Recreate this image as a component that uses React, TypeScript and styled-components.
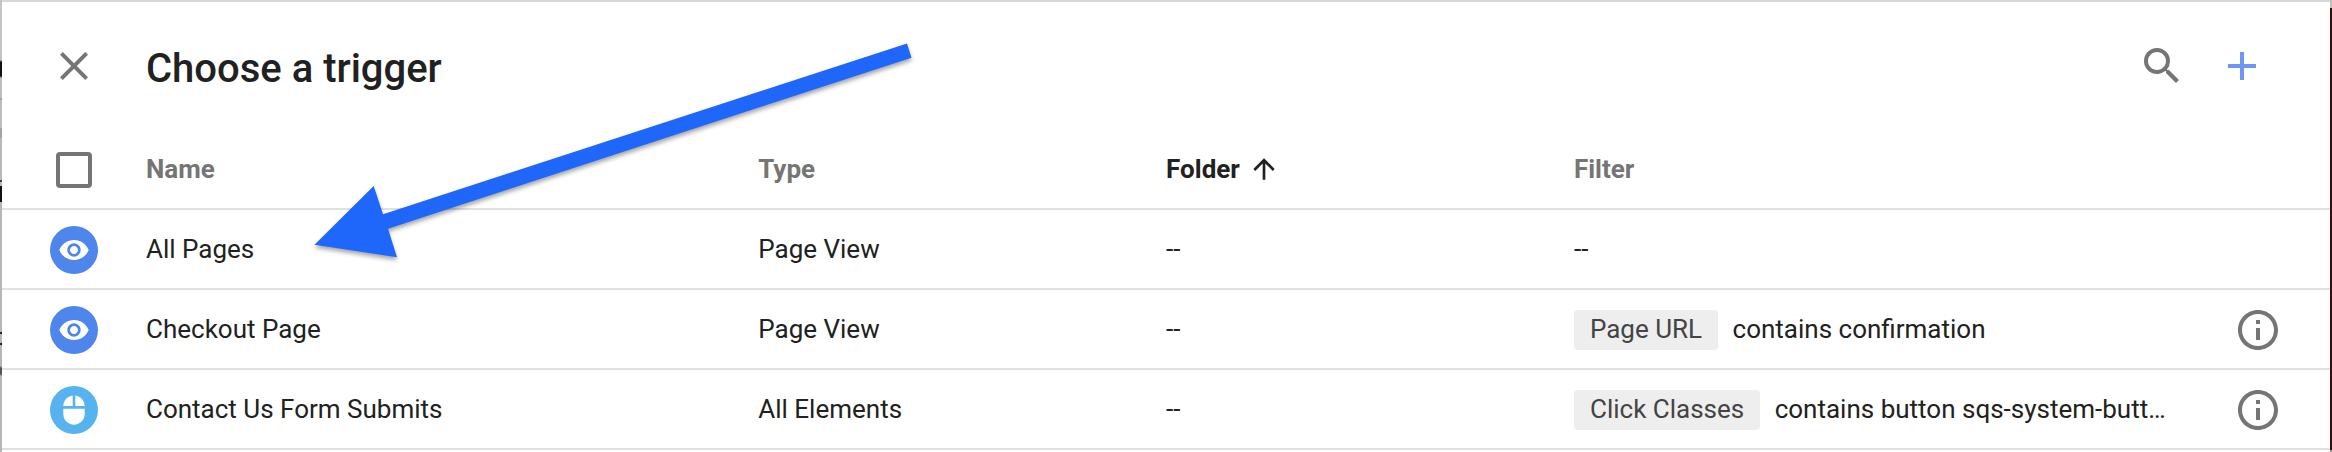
import React from 'react';
import styled, { createGlobalStyle } from 'styled-components';
import {
  MdAdd,
  MdArrowUpward,
  MdClose,
  MdInfoOutline,
  MdMouse,
  MdSearch,
  MdVisibility,
} from 'react-icons/md';

const GlobalStyle = createGlobalStyle`
  * { box-sizing: border-box; }
  body {
    margin: 0;
    background: #fff;
    color: #212121;
    font-family: Roboto, sans-serif;
    font-size: 26px;
    line-height: 40px;
  }
`;

const Frame = styled.div`
  display: grid;
  grid-template-columns: 2px minmax(0, 1fr) 2px;
  min-height: 100vh;
`;

/* Sliver of the dimmed page that shows beside the sheet. */
const LeftEdge = styled.div`
  background: linear-gradient(
    #c4c4c4 0 60px,
    #111 62px 76px,
    #bdbdbd 78px 98px,
    #a3a3a3 98px 100px,
    #bdbdbd 100px 128px,
    #a3a3a3 128px 138px,
    #b9b9b9 138px 180px,
    #444 180px 182px,
    #b9b9b9 182px 186px,
    #111 186px 202px,
    #b5b5b5 202px 332px,
    #222 332px 334px,
    #b5b5b5 334px 343px,
    #222 343px 345px,
    #b5b5b5 345px 366px,
    #555 368px 374px,
    #b5b5b5 376px
  );
`;

const RightEdge = styled.div`
  background: linear-gradient(#c0c0c0 0 8px, #380c08 8px 450px, #999 450px);
`;

const Sheet = styled.main`
  position: relative;
  background: #fff;
  border-top: 2px solid #d6d6d6;
`;

const TitleBar = styled.header`
  display: flex;
  align-items: center;
  height: 128px;
  padding: 0 64px 0 48px;
`;

const Title = styled.h1`
  flex: 1;
  margin: 0 0 0 48px;
  padding-top: 6px;
  font-size: 40px;
  line-height: 48px;
  font-weight: 500;
`;

const Actions = styled.div`
  display: flex;
  gap: 32px;
`;

const IconButton = styled.button<{ $tone?: 'accent' }>`
  display: block;
  width: 48px;
  height: 48px;
  padding: 0;
  border: 0;
  background: none;
  color: ${(p) => (p.$tone === 'accent' ? '#6a98f0' : '#757575')};
  cursor: pointer;

  svg {
    display: block;
    width: 48px;
    height: 48px;
  }
`;

const Table = styled.table`
  width: 100%;
  table-layout: fixed;
  border-collapse: separate;
  border-spacing: 0;
`;

const Col = styled.col<{ $width?: string }>`
  width: ${(p) => p.$width ?? 'auto'};
`;

const Row = styled.tr`
  height: 80px;
`;

const HeadCell = styled.th`
  height: 80px;
  padding: 0;
  border-bottom: 2px solid #e0e0e0;
  color: #757575;
  font-weight: 700;
  text-align: left;
`;

const Cell = styled.td`
  padding: 0 16px 0 0;
  border-bottom: 2px solid #e0e0e0;
  overflow: hidden;
  white-space: nowrap;
  text-overflow: ellipsis;
`;

const IconCell = styled(Cell)`
  padding: 2px 48px 0;
`;

const SelectAll = styled.input`
  appearance: none;
  display: block;
  width: 36px;
  height: 36px;
  margin: 0 auto;
  border: 4px solid #757575;
  border-radius: 4px;
`;

const CheckCell = styled(HeadCell)`
  padding-top: 2px;
`;

const SortButton = styled.button`
  display: flex;
  align-items: center;
  gap: 8px;
  padding: 0;
  border: 0;
  background: none;
  color: #212121;
  font: inherit;
  cursor: pointer;

  svg {
    width: 32px;
    height: 32px;
  }
`;

const TypeBadge = styled.span<{ $color: string }>`
  display: flex;
  align-items: center;
  justify-content: center;
  width: 48px;
  height: 48px;
  border-radius: 50%;
  background: ${(p) => p.$color};
  color: #fff;

  svg {
    width: 32px;
    height: 32px;
  }
`;

const Chip = styled.span`
  display: inline-block;
  margin-right: 8px;
  padding: 0 16px 2px;
  border-radius: 4px;
  background: #eee;
  color: #444;
  line-height: 38px;
`;

const Pointer = styled.svg`
  position: absolute;
  top: 34px;
  left: 304px;
  width: 620px;
  height: 240px;
  pointer-events: none;
  filter: drop-shadow(0 3px 2px rgba(0, 0, 0, 0.35));
`;

type Trigger = {
  name: string;
  type: string;
  folder: string;
  kind: 'view' | 'click';
  filter?: { variable: string; rule: string };
};

const triggers: Trigger[] = [
  { name: 'All Pages', type: 'Page View', folder: '--', kind: 'view' },
  {
    name: 'Checkout Page',
    type: 'Page View',
    folder: '--',
    kind: 'view',
    filter: { variable: 'Page URL', rule: 'contains confirmation' },
  },
  {
    name: 'Contact Us Form Submits',
    type: 'All Elements',
    folder: '--',
    kind: 'click',
    filter: { variable: 'Click Classes', rule: 'contains button sqs-system-butt…' },
  },
];

function TriggerRow({ trigger }: { trigger: Trigger }) {
  const { name, type, folder, kind, filter } = trigger;
  return (
    <Row>
      <IconCell>
        <TypeBadge $color={kind === 'view' ? '#4f86ec' : '#56b3ef'}>
          {kind === 'view' ? <MdVisibility /> : <MdMouse />}
        </TypeBadge>
      </IconCell>
      <Cell>{name}</Cell>
      <Cell>{type}</Cell>
      <Cell>{folder}</Cell>
      <Cell>
        {filter ? (
          <>
            <Chip>{filter.variable}</Chip> {filter.rule}
          </>
        ) : (
          '--'
        )}
      </Cell>
      <IconCell>
        {filter && (
          <IconButton type="button" aria-label={`Details of ${name}`}>
            <MdInfoOutline />
          </IconButton>
        )}
      </IconCell>
    </Row>
  );
}

export default function App() {
  return (
    <Frame>
      <GlobalStyle />
      <LeftEdge />
      <Sheet>
        <TitleBar>
          <IconButton type="button" aria-label="Close">
            <MdClose />
          </IconButton>
          <Title>Choose a trigger</Title>
          <Actions>
            <IconButton type="button" aria-label="Search">
              <MdSearch />
            </IconButton>
            <IconButton type="button" aria-label="New trigger" $tone="accent">
              <MdAdd />
            </IconButton>
          </Actions>
        </TitleBar>
        <Table>
          <colgroup>
            <Col $width="144px" />
            <Col $width="26.3%" />
            <Col $width="17.52%" />
            <Col $width="17.52%" />
            <Col />
            <Col $width="144px" />
          </colgroup>
          <thead>
            <tr>
              <CheckCell>
                <SelectAll type="checkbox" aria-label="Select all triggers" />
              </CheckCell>
              <HeadCell scope="col">Name</HeadCell>
              <HeadCell scope="col">Type</HeadCell>
              <HeadCell scope="col" aria-sort="ascending">
                <SortButton type="button">
                  Folder
                  <MdArrowUpward />
                </SortButton>
              </HeadCell>
              <HeadCell scope="col">Filter</HeadCell>
              <HeadCell />
            </tr>
          </thead>
          <tbody>
            {triggers.map((trigger) => (
              <TriggerRow key={trigger.name} trigger={trigger} />
            ))}
          </tbody>
        </Table>
        <Pointer viewBox="306 36 620 240" aria-hidden="true">
          <path
            fill="#1f66fa"
            d="M314.5 244.7 373.7 186 383 214.3 907 43.5 911.5 57.7 388 228.7 397 257.3Z"
          />
        </Pointer>
      </Sheet>
      <RightEdge />
    </Frame>
  );
}
